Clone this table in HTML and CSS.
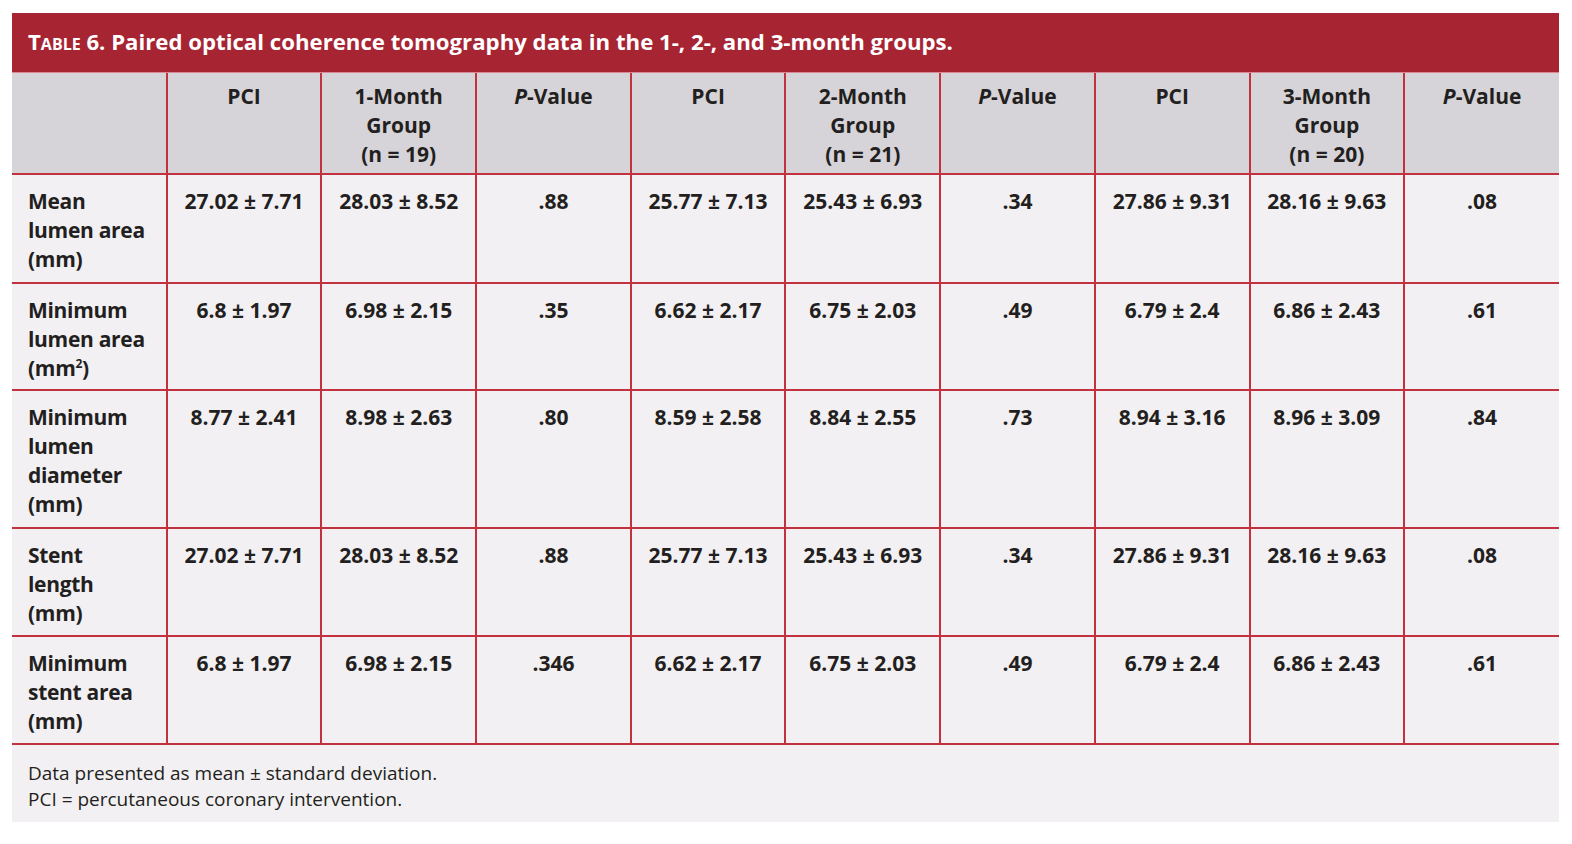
FILE: index.html
```html
<!DOCTYPE html>
<html lang="en">
<head>
<meta charset="utf-8">
<title>Table 6</title>
<link rel="stylesheet" href="styles.css">
</head>
<body>
<div class="card">
  <div class="title"><span class="sc">Table 6.</span> Paired optical coherence tomography data in the 1-, 2-, and 3-month groups.</div>
  <table class="data">
    <colgroup>
      <col><col><col><col><col><col><col><col><col><col>
    </colgroup>
    <thead>
      <tr>
        <th></th>
        <th>PCI</th>
        <th>1-Month<br>Group<br>(n = 19)</th>
        <th><i>P</i>-Value</th>
        <th>PCI</th>
        <th>2-Month<br>Group<br>(n = 21)</th>
        <th><i>P</i>-Value</th>
        <th>PCI</th>
        <th>3-Month<br>Group<br>(n = 20)</th>
        <th><i>P</i>-Value</th>
      </tr>
    </thead>
    <tbody>
      <tr class="r1">
        <td class="lbl">Mean<br>lumen area<br>(mm)</td>
        <td>27.02 ± 7.71</td><td>28.03 ± 8.52</td><td>.88</td>
        <td>25.77 ± 7.13</td><td>25.43 ± 6.93</td><td>.34</td>
        <td>27.86 ± 9.31</td><td>28.16 ± 9.63</td><td>.08</td>
      </tr>
      <tr class="r2">
        <td class="lbl">Minimum<br>lumen area<br>(mm<sup>2</sup>)</td>
        <td>6.8 ± 1.97</td><td>6.98 ± 2.15</td><td>.35</td>
        <td>6.62 ± 2.17</td><td>6.75 ± 2.03</td><td>.49</td>
        <td>6.79 ± 2.4</td><td>6.86 ± 2.43</td><td>.61</td>
      </tr>
      <tr class="r3">
        <td class="lbl">Minimum<br>lumen<br>diameter<br>(mm)</td>
        <td>8.77 ± 2.41</td><td>8.98 ± 2.63</td><td>.80</td>
        <td>8.59 ± 2.58</td><td>8.84 ± 2.55</td><td>.73</td>
        <td>8.94 ± 3.16</td><td>8.96 ± 3.09</td><td>.84</td>
      </tr>
      <tr class="r4">
        <td class="lbl">Stent<br>length<br>(mm)</td>
        <td>27.02 ± 7.71</td><td>28.03 ± 8.52</td><td>.88</td>
        <td>25.77 ± 7.13</td><td>25.43 ± 6.93</td><td>.34</td>
        <td>27.86 ± 9.31</td><td>28.16 ± 9.63</td><td>.08</td>
      </tr>
      <tr class="r5">
        <td class="lbl">Minimum<br>stent area<br>(mm)</td>
        <td>6.8 ± 1.97</td><td>6.98 ± 2.15</td><td>.346</td>
        <td>6.62 ± 2.17</td><td>6.75 ± 2.03</td><td>.49</td>
        <td>6.79 ± 2.4</td><td>6.86 ± 2.43</td><td>.61</td>
      </tr>
    </tbody>
  </table>
  <div class="foot">
    <p>Data presented as mean ± standard deviation.</p>
    <p>PCI = percutaneous coronary intervention.</p>
  </div>
</div>
</body>
</html>
```

FILE: styles.css
```css
html, body {
  margin: 0;
  padding: 0;
  background: #ffffff;
}

body {
  font-family: "Open Sans", "Noto Sans", sans-serif;
  color: #231f20;
}

.card {
  width: 1547px;
  margin: 13px 0 0 12px;
}

.title {
  box-sizing: border-box;
  height: 60px;
  background: #a72433;
  color: #ffffff;
  font-weight: 700;
  font-size: 22.2px;
  letter-spacing: 0;
  line-height: 58px;
  padding-left: 16px;
  white-space: nowrap;
  border-bottom: 1px solid #d98a93;
}

.sc {
  font-variant: small-caps;
}

.data {
  width: 1547px;
  table-layout: fixed;
  border-collapse: collapse;
  font-size: 21px;
  font-weight: 700;
  letter-spacing: 0;
  line-height: 29px;
}

.data th,
.data td {
  border: 2px solid #c3313f;
  vertical-align: top;
  text-align: center;
  padding: 0 4px;
}

.data tr > :first-child {
  border-left: none;
}

.data tr > :last-child {
  border-right: none;
}

.data thead tr {
  height: 101px;
  background: #d6d4d8;
}

.data thead th {
  border-top: none;
  padding-top: 9px;
  font-weight: 700;
}

.data tbody tr {
  background: #f2f0f2;
}

.data td {
  padding-top: 12px;
}

.data td.lbl {
  text-align: left;
  padding-left: 16px;
  letter-spacing: -0.3px;
}

.data sup {
  font-size: 12px;
  line-height: 0;
  vertical-align: 8px;
}

.r1 { height: 109px; }
.r2 { height: 107px; }
.r3 { height: 138px; }
.r4 { height: 108px; }
.r5 { height: 108px; }

.foot {
  background: #f2f0f2;
  height: 77px;
  box-sizing: border-box;
  padding: 15px 16px 0;
  font-size: 19px;
  line-height: 26px;
  font-weight: 400;
}

.foot p {
  margin: 0;
}
```
